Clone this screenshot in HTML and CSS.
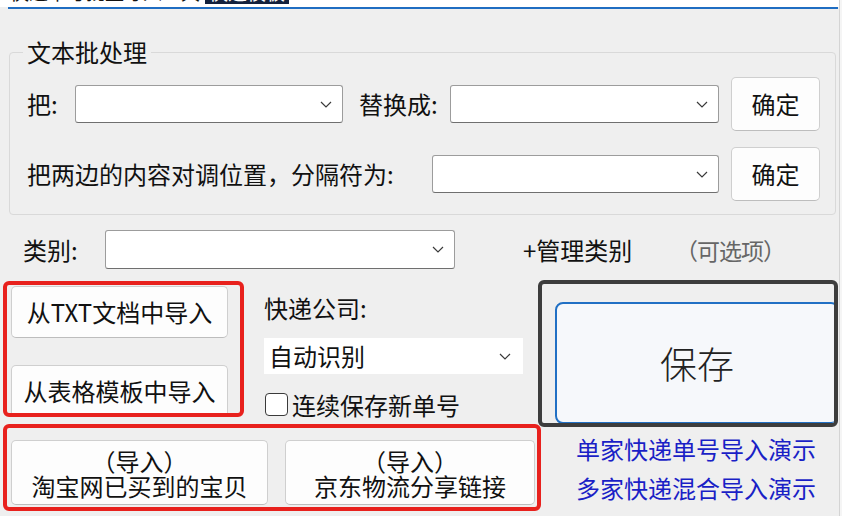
FILE: index.html
```html
<!DOCTYPE html>
<html lang="zh-CN">
<head>
<meta charset="utf-8">
<title>文本批处理</title>
<link rel="stylesheet" href="styles.css">
</head>
<body>
<div class="window">
  <div class="tabstrip"><span class="tab-text">快递单号批量导入工具</span><span class="tab-sel">快速模板</span></div>
  <div class="tabline"></div>

  <fieldset class="group">
    <legend class="group-title">文本批处理</legend>
    <div class="row row-first">
      <span class="lbl lbl-ba">把:</span>
      <div class="combo combo-a"><svg class="chev" viewBox="0 0 12 7" width="12" height="7"><path d="M1 1 L6 6 L11 1" /></svg></div>
      <span class="lbl lbl-replace">替换成:</span>
      <div class="combo combo-b"><svg class="chev" viewBox="0 0 12 7" width="12" height="7"><path d="M1 1 L6 6 L11 1" /></svg></div>
      <button class="btn btn-ok">确定</button>
    </div>
    <div class="row row-second">
      <span class="lbl lbl-swap">把两边的内容对调位置，分隔符为:</span>
      <div class="combo combo-c"><svg class="chev" viewBox="0 0 12 7" width="12" height="7"><path d="M1 1 L6 6 L11 1" /></svg></div>
      <button class="btn btn-ok">确定</button>
    </div>
  </fieldset>

  <div class="row cat-row">
    <span class="lbl lbl-cat">类别:</span>
    <div class="combo combo-cat"><svg class="chev" viewBox="0 0 12 7" width="12" height="7"><path d="M1 1 L6 6 L11 1" /></svg></div>
    <span class="lbl lbl-manage">+管理类别</span>
    <span class="lbl lbl-optional">（可选项）</span>
  </div>

  <div class="bottom">
    <div class="redbox redbox-import">
      <button class="btn btn-import">从TXT文档中导入</button>
      <button class="btn btn-import btn-import2">从表格模板中导入</button>
    </div>

    <div class="courier">
      <div class="lbl courier-lbl">快递公司:</div>
      <div class="dropdown"><span>自动识别</span><svg class="chev" viewBox="0 0 12 7" width="12" height="7"><path d="M1 1 L6 6 L11 1" /></svg></div>
      <label class="check-row"><span class="checkbox"></span><span class="lbl">连续保存新单号</span></label>
    </div>

    <div class="savebox">
      <button class="btn-save">保存</button>
    </div>

    <div class="redbox redbox-links">
      <button class="btn btn-two btn-taobao"><span class="line">（导入）</span><span class="line">淘宝网已买到的宝贝</span></button>
      <button class="btn btn-two btn-jd"><span class="line">（导入）</span><span class="line">京东物流分享链接</span></button>
    </div>

    <div class="demos">
      <div class="demo-link">单家快递单号导入演示</div>
      <div class="demo-link demo-link2">多家快递混合导入演示</div>
    </div>
  </div>
</div>
</body>
</html>
```

FILE: styles.css
```css
* { box-sizing: border-box; }

html, body {
  margin: 0;
  padding: 0;
  background: #f5f5f5;
}

body {
  font-family: "Noto Sans CJK SC", "Noto Sans", sans-serif;
  font-size: 24px;
  color: #111;
}

.window {
  width: 840px;
  height: 516px;
  background: #efefef;
  border-right: 1px solid #d4d4d4;
  overflow: hidden;
}

.tabstrip {
  height: 7px;
  background: #ffffff;
  overflow: hidden;
  padding-left: 10px;
  white-space: nowrap;
}

.tab-text,
.tab-sel {
  display: inline-block;
  font-size: 19px;
  line-height: 24px;
  margin-top: -20px;
  vertical-align: top;
}

.tab-text {
  width: 195px;
  color: #111;
}

.tab-sel {
  background: #13213d;
  color: #fff;
  padding: 0 4px;
}

.tabline {
  height: 2px;
  margin-left: 8px;
  width: 830px;
  background: #1f6dc2;
}

/* group box */
.group {
  margin: 29px 0 0 9px;
  width: 827px;
  padding: 0 0 13px 0;
  border: 1px solid #d9d9d9;
  border-radius: 4px;
  min-width: 0;
}

.group-title {
  margin-left: 13px;
  padding: 0 4px;
  font-size: 24px;
  line-height: 28px;
}

.row {
  display: flex;
  align-items: center;
}

.row-first {
  margin-top: 11px;
  height: 54px;
  padding-left: 17px;
}

.row-second {
  margin-top: 16px;
  height: 54px;
  padding-left: 17px;
}

.lbl {
  flex: none;
  white-space: nowrap;
  line-height: 28px;
}

.lbl-ba { width: 48px; }
.lbl-replace { width: 91px; margin-left: 16px; }
.lbl-swap { width: 405px; }

/* combo boxes */
.combo {
  flex: none;
  height: 38px;
  background: #ffffff;
  border: 1px solid #9c9c9c;
  border-bottom-color: #6f6f6f;
  border-radius: 3px;
  display: flex;
  align-items: center;
  justify-content: flex-end;
  padding-right: 10px;
}

.combo-a { width: 268px; }
.combo-b { width: 269px; }
.combo-c { width: 287px; }
.combo-cat { width: 350px; height: 39px; }

.chev {
  flex: none;
  fill: none;
  stroke: #3a3a3a;
  stroke-width: 1.2;
}

/* buttons */
.btn {
  flex: none;
  font-family: inherit;
  font-size: 24px;
  color: #111;
  background: #fdfdfd;
  border: 1px solid #cfcfcf;
  border-bottom-color: #bdbdbd;
  border-radius: 5px;
  padding: 0;
  line-height: 28px;
}

.btn-ok {
  width: 89px;
  height: 54px;
  margin-left: 12px;
}

/* category row */
.cat-row {
  margin-top: 15px;
  padding-left: 23px;
  height: 39px;
}

.lbl-cat { width: 82px; }
.lbl-manage { width: 152px; margin-left: 68px; }
.lbl-optional {
  color: #666;
  font-size: 23px;
  letter-spacing: -1px;
}

/* bottom area */
.bottom {
  margin: 11px 0 0 3px;
  display: grid;
  grid-template-columns: 241px 294px 300px;
  grid-template-rows: 144px 88px;
}

.redbox {
  border: 4px solid #e8211d;
  border-radius: 6px;
  overflow: hidden;
}

.redbox-import {
  grid-column: 1;
  grid-row: 1;
  margin-top: 1px;
  height: 136px;
  padding: 1px 0 0 4px;
  display: flex;
  flex-direction: column;
  align-items: flex-start;
  gap: 27px;
}

.btn-import {
  width: 217px;
  height: 52px;
}

.courier {
  grid-column: 2;
  grid-row: 1;
  padding: 14px 0 0 20px;
}

.dropdown {
  margin-top: 16px;
  width: 259px;
  height: 36px;
  background: #ffffff;
  display: flex;
  align-items: center;
  justify-content: space-between;
  padding: 0 12px 0 5px;
  line-height: 28px;
}

.check-row {
  margin-top: 18px;
  display: flex;
  align-items: center;
  gap: 4px;
  padding-left: 1px;
  height: 25px;
}

.checkbox {
  flex: none;
  width: 23px;
  height: 23px;
  border: 1.5px solid #3a3a3a;
  border-radius: 4px;
  background: #ffffff;
}

.savebox {
  grid-column: 3;
  grid-row: 1;
  height: 147px;
  border: 4px solid #3d3d3d;
  border-radius: 6px;
  overflow: hidden;
  padding: 18px 0 0 13px;
  position: relative;
  z-index: 1;
}

.btn-save {
  display: block;
  width: 284px;
  height: 122px;
  background: #f6f8fb;
  border: 2px solid #2170c4;
  border-radius: 8px;
  font-family: inherit;
  font-size: 37px;
  font-weight: 300;
  color: #222;
  padding: 0;
  line-height: 44px;
}

.redbox-links {
  grid-column: 1 / 3;
  grid-row: 2;
  margin-right: -3px;
  height: 87px;
  padding: 12px 0 0 4px;
  display: flex;
  align-items: flex-start;
  gap: 17px;
}

.btn-two {
  height: 65px;
  display: flex;
  flex-direction: column;
  align-items: center;
  justify-content: center;
  line-height: 25px;
}

.btn-taobao { width: 257px; }
.btn-jd { width: 250px; }

.line { display: block; white-space: nowrap; }

.demos {
  grid-column: 3;
  grid-row: 2;
  padding: 10px 0 0 38px;
  position: relative;
  z-index: 2;
}

.demo-link {
  color: #1a1fc6;
  line-height: 30px;
  white-space: nowrap;
}

.demo-link2 { margin-top: 9px; }
```
